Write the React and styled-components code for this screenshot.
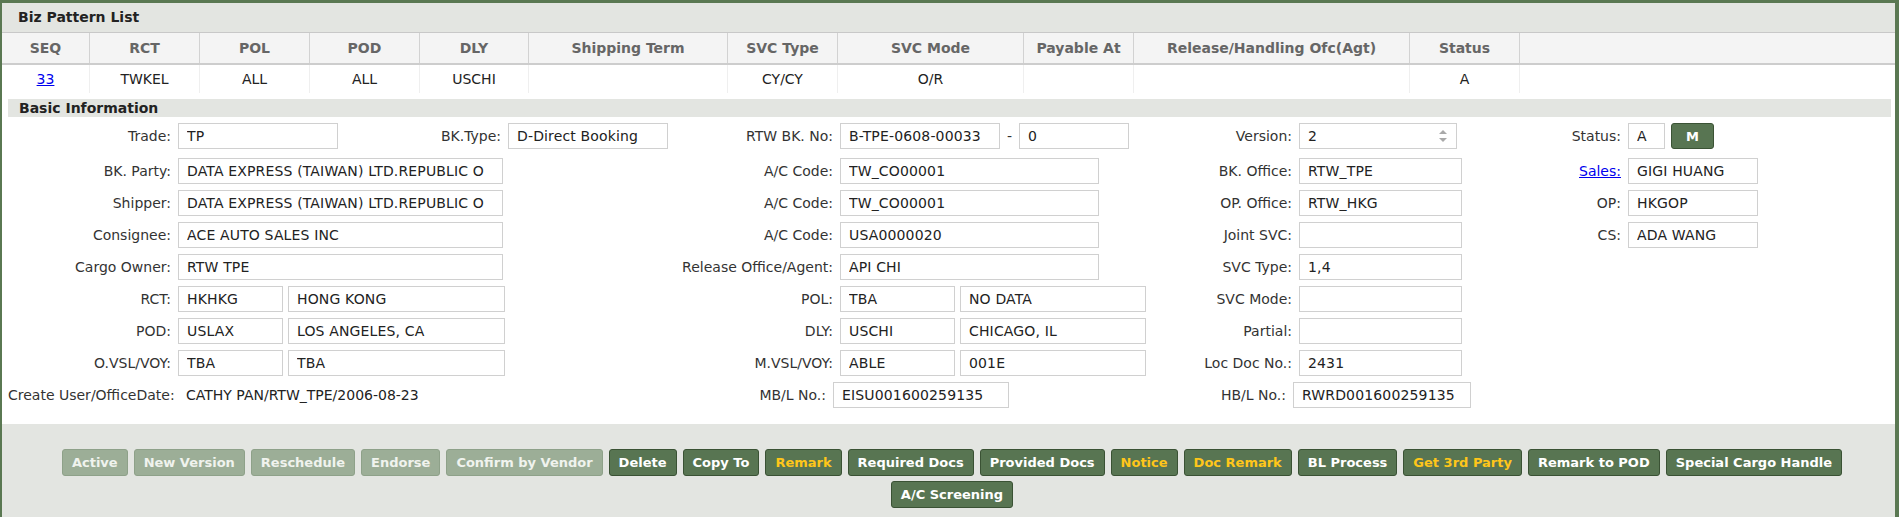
import React from 'react';
import styled, { createGlobalStyle, css } from 'styled-components';

const Global = createGlobalStyle`
  html, body { margin: 0; padding: 0; background: #fff; }
  body { font-family: "DejaVu Sans", Verdana, sans-serif; font-size: 14px; color: #222; }
  * { box-sizing: border-box; }
`;

const GREEN = '#5a7852';

const Page = styled.div`
  width: 1899px;
  height: 517px;
  border-top: 3px solid ${GREEN};
  border-left: 2px solid ${GREEN};
  border-right: 4px solid ${GREEN};
  display: flex;
  flex-direction: column;
  background: #fff;
  overflow: hidden;
`;

const TitleBar = styled.div`
  height: 30px;
  line-height: 29px;
  background: #e3e5e1;
  border-bottom: 1px solid #c8c8c8;
  padding-left: 16px;
  font-weight: bold;
  color: #222;
`;

const COLS = '88px 110px 110px 110px 109px 199px 110px 186px 110px 276px 110px 1fr';

const HeadRow = styled.div`
  display: grid;
  grid-template-columns: ${COLS};
  height: 32px;
  background: #f4f4f4;
  border-bottom: 2px solid #cdcdcd;
`;

const HeadCell = styled.div`
  display: flex;
  align-items: center;
  justify-content: center;
  font-weight: bold;
  color: #666;
  border-right: ${p => (p.$last ? 'none' : '1px solid #d2d2d2')};
`;

const DataRow = styled.div`
  display: grid;
  grid-template-columns: ${COLS};
  height: 28px;
  background: #fff;
`;

const DataCell = styled.div`
  display: flex;
  align-items: center;
  justify-content: center;
  color: #222;
  border-right: ${p => (p.$last ? 'none' : '1px solid #efefef')};
`;

const Link = styled.a`
  color: #0000ee;
  text-decoration: underline;
  cursor: pointer;
`;

const SectionBar = styled.div`
  margin: 6px 4px 0 6px;
  height: 18px;
  line-height: 18px;
  background: #e3e5e1;
  padding-left: 11px;
  font-weight: bold;
  color: #222;
`;

const Form = styled.div`
  height: 307px;
  padding: 6px 0 0 6px;
  display: flex;
  flex-direction: column;
`;

const gridCols = css`
  display: grid;
  grid-template-columns: 170px 332px 330px 310px 149px 176px 153px 1fr;
  grid-auto-rows: 26px;
`;

const FirstRow = styled.div`
  ${gridCols};
  margin-bottom: 9px;
`;

const FormGrid = styled.div`
  ${gridCols};
  row-gap: 6px;
`;

const Label = styled.div`
  display: flex;
  align-items: center;
  justify-content: flex-end;
  padding-right: 7px;
  color: #333;
  white-space: nowrap;
  margin-left: ${p => p.$shift || 0}px;
  margin-right: ${p => -(p.$shift || 0)}px;
  ${p => p.$grow && 'flex: 1;'}
  ${p => p.$basis && `flex: 0 0 ${p.$basis}px;`}
`;

const StartLabel = styled.div`
  display: flex;
  align-items: center;
  justify-content: flex-start;
  color: #333;
  white-space: nowrap;
  overflow: visible;
  width: 163px;
`;

const Cell = styled.div`
  display: flex;
  align-items: center;
  gap: ${p => p.$gap ?? 5}px;
  margin-left: ${p => p.$shift || 0}px;
  ${p => p.$span && `grid-column: span ${p.$span};`}
`;

const Input = styled.input`
  width: ${p => p.$w}px;
  height: 26px;
  flex: 0 0 auto;
  border: 1px solid #d0d0d0;
  padding: 0 8px;
  font-family: "DejaVu Sans", Verdana, sans-serif;
  font-size: 14px;
  letter-spacing: 0.15px;
  color: #222;
  background: #fff;
  outline: none;
`;

const Dash = styled.span`
  color: #333;
  padding: 0 1px;
`;

const SpinBox = styled.div`
  width: ${p => p.$w}px;
  height: 26px;
  border: 1px solid #d0d0d0;
  display: flex;
  align-items: center;
  padding: 0 8px;
  background: #fff;
`;

const SpinInput = styled.input`
  flex: 1;
  min-width: 0;
  border: none;
  padding: 0;
  font-family: "DejaVu Sans", Verdana, sans-serif;
  font-size: 14px;
  color: #222;
  outline: none;
  background: transparent;
`;

const Value = styled.div`
  display: flex;
  align-items: center;
  padding-left: 8px;
  color: #222;
  white-space: nowrap;
`;

const SmallBtn = styled.button`
  width: 43px;
  height: 26px;
  border: 1px solid #3b5335;
  border-radius: 3px;
  background: #587552;
  color: #fff;
  font-family: "DejaVu Sans", Verdana, sans-serif;
  font-weight: bold;
  font-size: 13px;
  padding: 0;
`;

const ButtonBar = styled.div`
  flex: 1;
  background: #e3e5e1;
  display: flex;
  flex-wrap: wrap;
  justify-content: center;
  align-content: flex-start;
  gap: 5px 6px;
  padding: 25px 0 0 7px;
`;

const ActionButton = styled.button`
  height: 27px;
  padding: 0 9px;
  border-radius: 3px;
  font-family: "DejaVu Sans", Verdana, sans-serif;
  font-weight: bold;
  font-size: 13px;
  white-space: nowrap;
  border: 1px solid ${p => (p.$disabled ? '#8ea189' : '#3a5234')};
  background: ${p => (p.$disabled ? '#9cae97' : '#587552')};
  color: ${p => (p.$disabled ? '#f0f3ee' : p.$yellow ? '#ffc61a' : '#ffffff')};
`;

const Spinner = () => (
  <svg width="10" height="14" viewBox="0 0 10 14">
    <path d="M1 5 L5 1 L9 5 Z" fill="#a9a9a9" />
    <path d="M1 9 L5 13 L9 9 Z" fill="#a9a9a9" />
  </svg>
);

const headers = ['SEQ', 'RCT', 'POL', 'POD', 'DLY', 'Shipping Term', 'SVC Type', 'SVC Mode', 'Payable At', 'Release/Handling Ofc(Agt)', 'Status', ''];
const rowData = ['33', 'TWKEL', 'ALL', 'ALL', 'USCHI', '', 'CY/CY', 'O/R', '', '', 'A', ''];

const buttons = [
  { t: 'Active', d: true },
  { t: 'New Version', d: true },
  { t: 'Reschedule', d: true },
  { t: 'Endorse', d: true },
  { t: 'Confirm by Vendor', d: true },
  { t: 'Delete' },
  { t: 'Copy To' },
  { t: 'Remark', y: true },
  { t: 'Required Docs' },
  { t: 'Provided Docs' },
  { t: 'Notice', y: true },
  { t: 'Doc Remark', y: true },
  { t: 'BL Process' },
  { t: 'Get 3rd Party', y: true },
  { t: 'Remark to POD' },
  { t: 'Special Cargo Handle' },
  { t: 'A/C Screening' },
];

const F = ({ w, v }) => <Input $w={w} value={v} readOnly />;

export default function App() {
  return (
    <>
      <Global />
      <Page>
        <TitleBar>Biz Pattern List</TitleBar>
        <HeadRow>
          {headers.map((h, i) => (
            <HeadCell key={i} $last={i === headers.length - 1}>{h}</HeadCell>
          ))}
        </HeadRow>
        <DataRow>
          {rowData.map((d, i) => (
            <DataCell key={i} $last={i === rowData.length - 1}>
              {i === 0 ? <Link>{d}</Link> : d}
            </DataCell>
          ))}
        </DataRow>
        <SectionBar>Basic Information</SectionBar>
        <Form>
          <FirstRow>
            <Label>Trade:</Label>
            <Cell $span={2} $gap={0}>
              <F w={160} v="TP" />
              <Label $basis={170}>BK.Type:</Label>
              <F w={160} v="D-Direct Booking" />
              <Label $grow>RTW BK. No:</Label>
            </Cell>
            <Cell $gap={6}>
              <F w={160} v="B-TPE-0608-00033" />
              <Dash>-</Dash>
              <F w={110} v="0" />
            </Cell>
            <Label>Version:</Label>
            <Cell>
              <SpinBox $w={158}>
                <SpinInput value="2" readOnly />
                <Spinner />
              </SpinBox>
            </Cell>
            <Label>Status:</Label>
            <Cell $gap={6}>
              <F w={37} v="A" />
              <SmallBtn>M</SmallBtn>
            </Cell>
          </FirstRow>
          <FormGrid>
            <Label>BK. Party:</Label>
            <Cell><F w={325} v="DATA EXPRESS (TAIWAN) LTD.REPUBLIC O" /></Cell>
            <Label>A/C Code:</Label>
            <Cell><F w={259} v="TW_CO00001" /></Cell>
            <Label>BK. Office:</Label>
            <Cell><F w={163} v="RTW_TPE" /></Cell>
            <Label><Link>Sales:</Link></Label>
            <Cell><F w={130} v="GIGI HUANG" /></Cell>

            <Label>Shipper:</Label>
            <Cell><F w={325} v="DATA EXPRESS (TAIWAN) LTD.REPUBLIC O" /></Cell>
            <Label>A/C Code:</Label>
            <Cell><F w={259} v="TW_CO00001" /></Cell>
            <Label>OP. Office:</Label>
            <Cell><F w={163} v="RTW_HKG" /></Cell>
            <Label>OP:</Label>
            <Cell><F w={130} v="HKGOP" /></Cell>

            <Label>Consignee:</Label>
            <Cell><F w={325} v="ACE AUTO SALES INC" /></Cell>
            <Label>A/C Code:</Label>
            <Cell><F w={259} v="USA0000020" /></Cell>
            <Label>Joint SVC:</Label>
            <Cell><F w={163} v="" /></Cell>
            <Label>CS:</Label>
            <Cell><F w={130} v="ADA WANG" /></Cell>

            <Label>Cargo Owner:</Label>
            <Cell><F w={325} v="RTW TPE" /></Cell>
            <Label>Release Office/Agent:</Label>
            <Cell><F w={259} v="API CHI" /></Cell>
            <Label>SVC Type:</Label>
            <Cell><F w={163} v="1,4" /></Cell>
            <Label />
            <Cell />

            <Label>RCT:</Label>
            <Cell><F w={105} v="HKHKG" /><F w={217} v="HONG KONG" /></Cell>
            <Label>POL:</Label>
            <Cell><F w={115} v="TBA" /><F w={186} v="NO DATA" /></Cell>
            <Label>SVC Mode:</Label>
            <Cell><F w={163} v="" /></Cell>
            <Label />
            <Cell />

            <Label>POD:</Label>
            <Cell><F w={105} v="USLAX" /><F w={217} v="LOS ANGELES, CA" /></Cell>
            <Label>DLY:</Label>
            <Cell><F w={115} v="USCHI" /><F w={186} v="CHICAGO, IL" /></Cell>
            <Label>Partial:</Label>
            <Cell><F w={163} v="" /></Cell>
            <Label />
            <Cell />

            <Label>O.VSL/VOY:</Label>
            <Cell><F w={105} v="TBA" /><F w={217} v="TBA" /></Cell>
            <Label>M.VSL/VOY:</Label>
            <Cell><F w={115} v="ABLE" /><F w={186} v="001E" /></Cell>
            <Label>Loc Doc No.:</Label>
            <Cell><F w={163} v="2431" /></Cell>
            <Label />
            <Cell />

            <StartLabel>Create User/OfficeDate:</StartLabel>
            <Value>CATHY PAN/RTW_TPE/2006-08-23</Value>
            <Label $shift={-7}>MB/L No.:</Label>
            <Cell $shift={-7}><F w={176} v="EISU001600259135" /></Cell>
            <Label $shift={-6}>HB/L No.:</Label>
            <Cell $shift={-6}><F w={178} v="RWRD001600259135" /></Cell>
            <Label />
            <Cell />
          </FormGrid>
        </Form>
        <ButtonBar>
          {buttons.map(b => (
            <ActionButton key={b.t} $disabled={b.d} $yellow={b.y}>{b.t}</ActionButton>
          ))}
        </ButtonBar>
      </Page>
    </>
  );
}
